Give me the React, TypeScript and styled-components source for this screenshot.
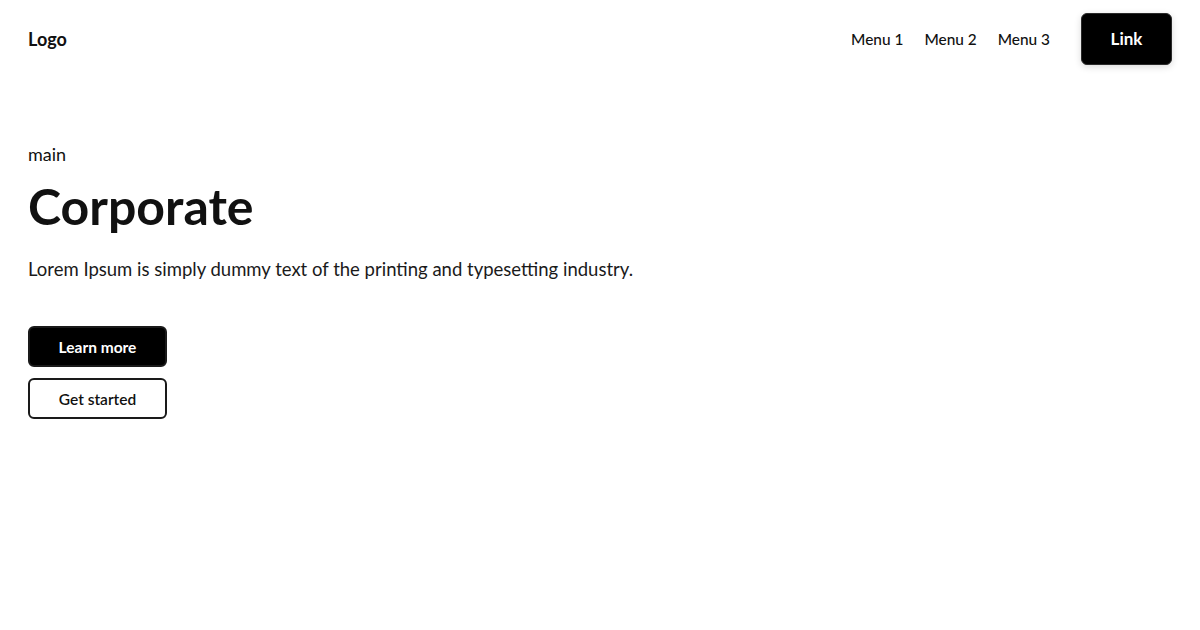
import React from 'react';
import styled, {createGlobalStyle} from "styled-components";

const GlobalStyle = createGlobalStyle`
    body {
        margin: 0;
        background: #ffffff;
        font-family: Lato, "Open Sans", sans-serif;
        color: #111111;
    }
`

export default function App() {
    return (
        <>
            <GlobalStyle/>
            <Header>
                <Logo>Logo</Logo>
                <Nav>
                    <MenuItem>Menu 1</MenuItem>
                    <MenuItem>Menu 2</MenuItem>
                    <MenuItem>Menu 3</MenuItem>
                    <LinkButton>Link</LinkButton>
                </Nav>
            </Header>
            <Main>
                <Eyebrow>main</Eyebrow>
                <Title>Corporate</Title>
                <Description>
                    Lorem Ipsum is simply dummy text of the printing and typesetting industry.
                </Description>
                <Actions>
                    <Button $primary>Learn more</Button>
                    <Button>Get started</Button>
                </Actions>
            </Main>
        </>
    );
}

const Header = styled.header`
    display: flex;
    align-items: center;
    justify-content: space-between;
    padding: 13px 28px 13px 28px;
`
const Logo = styled.div`
    font-size: 18px;
    font-weight: 700;
    color: #111;
`
const Nav = styled.nav`
    display: flex;
    align-items: center;
`
const MenuItem = styled.a`
    font-size: 15.4px;
    font-weight: 500;
    color: #111;
    margin-right: 21px;
    margin-top: -1px;
`
const LinkButton = styled.button`
    width: 91px;
    height: 52px;
    margin-left: 10px;
    background: #000;
    color: #fff;
    border: 1.5px solid #2a2a2a;
    border-radius: 6px;
    font-family: Lato, sans-serif;
    font-size: 17px;
    font-weight: 700;
    padding-bottom: 3px;
    box-shadow: 0 2px 7px rgba(0, 0, 0, 0.15);
`
const Main = styled.main`
    padding: 64px 28px 0;
`
const Eyebrow = styled.p`
    margin: 0;
    font-size: 18px;
    line-height: 24px;
    color: #111;
`
const Title = styled.h1`
    margin: 10px 0 0;
    font-size: 50px;
    font-weight: 700;
    line-height: 60px;
    color: #111;
`
const Description = styled.p`
    margin: 21px 0 0;
    font-size: 18.5px;
    font-weight: 400;
    line-height: 24px;
    color: #1a1a1a;
`
const Actions = styled.div`
    display: flex;
    flex-direction: column;
    align-items: flex-start;
    gap: 11px;
    margin-top: 45px;
`
const Button = styled.button<{ $primary?: boolean }>`
    width: 139px;
    height: 41px;
    border-radius: 6px;
    border: 2px solid #1a1a1a;
    background: ${p => p.$primary ? '#000' : '#fff'};
    color: ${p => p.$primary ? '#fff' : '#111'};
    font-family: Lato, sans-serif;
    font-size: 15.5px;
    font-weight: ${p => p.$primary ? 700 : 600};
`
